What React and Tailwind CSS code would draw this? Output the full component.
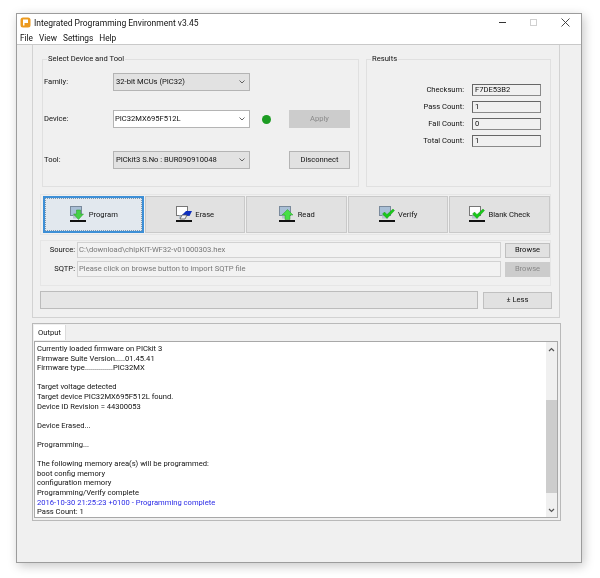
import React from "react";

const font = "font-['Roboto','Liberation_Sans',Arial,sans-serif]";

// Monitor + arrow/check icon used on the action buttons
const ActionIcon = ({ kind }) => {
  const blueScreen = kind !== "erase" && kind !== "blank";
  return (
    <svg width="18" height="20" viewBox="0 0 18 20" className="shrink-0">
      <rect x="1.5" y="1.5" width="11" height="9" fill={blueScreen ? "#a9bfd6" : "#ffffff"} stroke={blueScreen ? "#7a8a9c" : "#777777"} />
      <rect x="4" y="10.5" width="6" height="3" fill="#b8c4d0" />
      <rect x="1" y="15" width="16" height="2" fill="#111111" />
      {kind === "program" && <path d="M7.5 5h4v4h3l-5 5.5-5-5.5h3z" fill="#46d046" stroke="#2a9a2a" strokeWidth="0.5" />}
      {kind === "read" && <path d="M9.5 4.5l5.5 5.5h-3v4.5H7V10H4z" fill="#46e046" stroke="#2a9a2a" strokeWidth="0.5" />}
      {kind === "erase" && (
        <>
          <path d="M7 10l4-4h6l-2.500 5z" fill="#1030c0" />
          <path d="M5 14l2-4h5l-2 4z" fill="#f4f4f4" stroke="#555555" strokeWidth="0.8" />
        </>
      )}
      {(kind === "verify" || kind === "blank") && <path d="M4.500 9l2-2 2.500 2.500L15 4l1.500 1.500L9 13.500z" fill="#18c818" stroke="#109010" strokeWidth="0.4" />}
    </svg>
  );
};

const Chevron = () => (
  <svg width="6" height="4" viewBox="0 0 6 4" className="shrink-0">
    <path d="M0.500 0.500L3 3l2.500-2.500" fill="none" stroke="#555555" strokeWidth="0.9" />
  </svg>
);

const Combo = ({ text, active }) => (
  <div className={`w-[137px] h-[18px] border border-[#b4b4b4] flex items-center justify-between pr-[4px] ${active ? "bg-white pl-[1px]" : "bg-[#e2e2e2] pl-[2px]"}`}>
    <span className="text-[#111111] whitespace-nowrap">{text}</span>
    <Chevron />
  </div>
);

const Btn = ({ text, disabled }) => (
  <div className={`w-[61px] h-[18px] border flex items-center justify-center ${disabled ? "bg-[#cccccc] border-[#cccccc] text-[#8a8a8a]" : "bg-[#e1e1e1] border-[#b4b4b4] text-[#111111]"}`}>
    {text}
  </div>
);

const Group = ({ title, className, children }) => (
  <div className={`relative h-[128px] border border-[#e0e0e0] ${className}`}>
    <span className="absolute top-[-7px] left-[4px] bg-[#f0f0f0] px-[1px] leading-[12px] text-[#111111]">{title}</span>
    {children}
  </div>
);

const ResultRow = ({ label, value }) => (
  <div className="flex items-center h-[12px]">
    <span className="w-[97px] text-right text-[#111111]">{label}</span>
    <div className="ml-[8px] w-[69px] h-[12px] bg-[#f0f0f0] border border-[#666666] border-r-[#8a8a8a] border-b-[#8a8a8a] pl-[2px] leading-[10px] text-[#111111]">{value}</div>
  </div>
);

const actions = [
  { kind: "program", label: "Program" },
  { kind: "erase", label: "Erase" },
  { kind: "read", label: "Read" },
  { kind: "verify", label: "Verify" },
  { kind: "blank", label: "Blank Check" },
];

const outputLines = [
  "Currently loaded firmware on PICkit 3",
  "Firmware Suite Version.....01.45.41",
  "Firmware type..............PIC32MX",
  "",
  "Target voltage detected",
  "Target device PIC32MX695F512L found.",
  "Device ID Revision = 44300053",
  "",
  "Device Erased...",
  "",
  "Programming...",
  "",
  "The following memory area(s) will be programmed:",
  "boot config memory",
  "configuration memory",
  "Programming/Verify complete",
];

export default function App() {
  return (
    <div className={`w-[600px] h-[578px] bg-white pt-[13px] pl-[16px] overflow-hidden text-[7.6px] leading-[12px] blur-[0.35px] ${font}`}>
      <div className="w-[566px] h-[550px] flex flex-col bg-[#f0f0f0] border border-[#9c9c9c] shadow-[2px_3px_10px_rgba(0,0,0,0.22)]">
        {/* Title bar */}
        <div className="h-[17px] bg-white flex items-center pl-[3px] shrink-0">
          <svg width="11" height="11" viewBox="0 0 11 11" className="shrink-0">
            <rect x="0.5" y="0.5" width="10" height="10" rx="2.5" fill="#ec9a1e" />
            <path d="M3 2.5h5v3.500H4.500V8.500H3z" fill="#ffffff" />
          </svg>
          <span className="ml-[3px] text-[8.5px] text-[#111111]">Integrated Programming Environment v3.45</span>
          <div className="ml-auto flex items-center">
            <div className="w-[7px] h-[1px] bg-[#333333] mr-[24px]" />
            <div className="w-[7px] h-[7px] border border-[#d0d0d0] mr-[24px]" />
            <svg width="9" height="9" viewBox="0 0 9 9" className="mr-[11px]">
              <path d="M0.500 0.500l8 8M8.500 0.500l-8 8" stroke="#333333" strokeWidth="0.9" />
            </svg>
          </div>
        </div>
        {/* Menu */}
        <div className="h-[13px] bg-white flex items-center gap-[6px] pl-[3px] text-[8.3px] text-[#111111] shrink-0">
          <span>File</span>
          <span>View</span>
          <span>Settings</span>
          <span>Help</span>
        </div>
        <div className="h-[1px] bg-[#c9c9c9] shrink-0" />

        <div className="flex flex-col flex-1">
          {/* Main panel */}
          <div className="ml-[15px] w-[528px] h-[273px] border-l border-r border-b border-[#d2d2d2] pl-[7px] shrink-0">
            <div className="flex gap-[7px] pt-[14px] pl-[2px]">
              <Group title="Select Device and Tool" className="w-[317px] pt-[13px] pl-[1px]">
                <div className="flex items-center h-[18px]">
                  <span className="w-[69px] text-[#111111]">Family:</span>
                  <Combo text="32-bit MCUs (PIC32)" />
                </div>
                <div className="flex items-center h-[18px] mt-[19px]">
                  <span className="w-[69px] text-[#111111]">Device:</span>
                  <Combo text="PIC32MX695F512L" active />
                  <div className="ml-[12px] w-[9px] h-[9px] rounded-full bg-[#1c9c22]" />
                  <div className="ml-[18px]"><Btn text="Apply" disabled /></div>
                </div>
                <div className="flex items-center h-[18px] mt-[23px]">
                  <span className="w-[69px] text-[#111111]">Tool:</span>
                  <Combo text="PICkit3 S.No : BUR090910048" />
                  <div className="ml-[39px]"><Btn text="Disconnect" /></div>
                </div>
              </Group>
              <Group title="Results" className="w-[185px] pt-[24px] flex flex-col gap-[5px]">
                <ResultRow label="Checksum:" value="F7DE53B2" />
                <ResultRow label="Pass Count:" value="1" />
                <ResultRow label="Fail Count:" value="0" />
                <ResultRow label="Total Count:" value="1" />
              </Group>
            </div>

            {/* Action buttons */}
            <div className="mt-[7px] w-[511px] h-[41px] border border-[#e6e6e6] flex items-center gap-[1px] pl-[2px]">
              {actions.map((a) => (
                <div
                  key={a.kind}
                  className={`w-[100.5px] h-[37px] flex items-center justify-center gap-[2px] text-[#111111] ${a.kind === "program" ? "bg-[#e2e8ee] border-2 border-[#3d8fd6] outline outline-dotted outline-[#7d96ae] -outline-offset-3" : "bg-[#e1e1e1] border border-[#c9c9c9]"}`}
                >
                  <ActionIcon kind={a.kind} />
                  <span>{a.label}</span>
                </div>
              ))}
            </div>

            {/* Source / SQTP */}
            <div className="mt-[5px] w-[511px] h-[46px] border border-[#e6e6e6] flex flex-col gap-[3px] pt-[1px]">
              <div className="flex items-center h-[16px]">
                <span className="w-[34px] text-right text-[#111111]">Source:</span>
                <div className="ml-[2px] w-[424px] h-[16px] border border-[#d2d2d2] bg-[#f2f2f2] pl-[1px] leading-[14px] text-[#777777]">C:\download\chipKIT-WF32-v01000303.hex</div>
                <div className="ml-[4px] w-[45px] h-[15px] border border-[#c0c0c0] bg-[#e1e1e1] flex items-center justify-center text-[#111111]">Browse</div>
              </div>
              <div className="flex items-center h-[16px]">
                <span className="w-[34px] text-right text-[#111111]">SQTP:</span>
                <div className="ml-[2px] w-[424px] h-[16px] border border-[#d2d2d2] bg-[#f2f2f2] pl-[1px] leading-[14px] text-[#777777]">Please click on browse button to import SQTP file</div>
                <div className="ml-[4px] w-[45px] h-[15px] bg-[#cccccc] flex items-center justify-center text-[#8a8a8a]">Browse</div>
              </div>
            </div>

            {/* Progress */}
            <div className="mt-[5px] flex items-center">
              <div className="w-[438px] h-[18px] bg-[#e6e6e6] border border-[#bcbcbc]" />
              <div className="ml-[5px] w-[69px] h-[17px] bg-[#e1e1e1] border border-[#c0c0c0] flex items-center justify-center text-[#111111]">± Less</div>
            </div>
          </div>

          {/* Output */}
          <div className="mt-[5px] ml-[15px] w-[529px] h-[198px] border border-[#b9b9b9] pl-[1px] pt-[1px]">
            <div className="w-[32px] h-[15px] bg-white border-r border-[#dcdcdc] flex items-center justify-center text-[#111111]">Output</div>
            <div className="mt-[1px] w-[524px] h-[177px] border border-[#a8a8a8] bg-white flex">
              <div className="flex-1 pl-[2px] pt-[2px] leading-[9.6px] text-[#111111] overflow-hidden">
                {outputLines.map((line, i) => (
                  <div key={i} className="h-[9.6px]">{line}</div>
                ))}
                <div className="h-[9.6px] text-[#2a2ae6]">2016-10-30 21:25:23 +0100 - Programming complete</div>
                <div className="h-[9.6px]">Pass Count: 1</div>
              </div>
              {/* Scrollbar */}
              <div className="w-[11px] bg-[#f0f0f0] flex flex-col items-center">
                <svg width="7" height="5" viewBox="0 0 7 5" className="mt-[5px] mb-[48px] shrink-0">
                  <path d="M1 4l2.500-2.500L6 4" fill="none" stroke="#555555" strokeWidth="1.2" />
                </svg>
                <div className="w-[11px] h-[93px] bg-[#cdcdcd] shrink-0" />
                <svg width="7" height="5" viewBox="0 0 7 5" className="mt-[15px] shrink-0">
                  <path d="M1 1l2.500 2.500L6 1" fill="none" stroke="#555555" strokeWidth="1.2" />
                </svg>
              </div>
            </div>
          </div>
        </div>
      </div>
    </div>
  );
}
